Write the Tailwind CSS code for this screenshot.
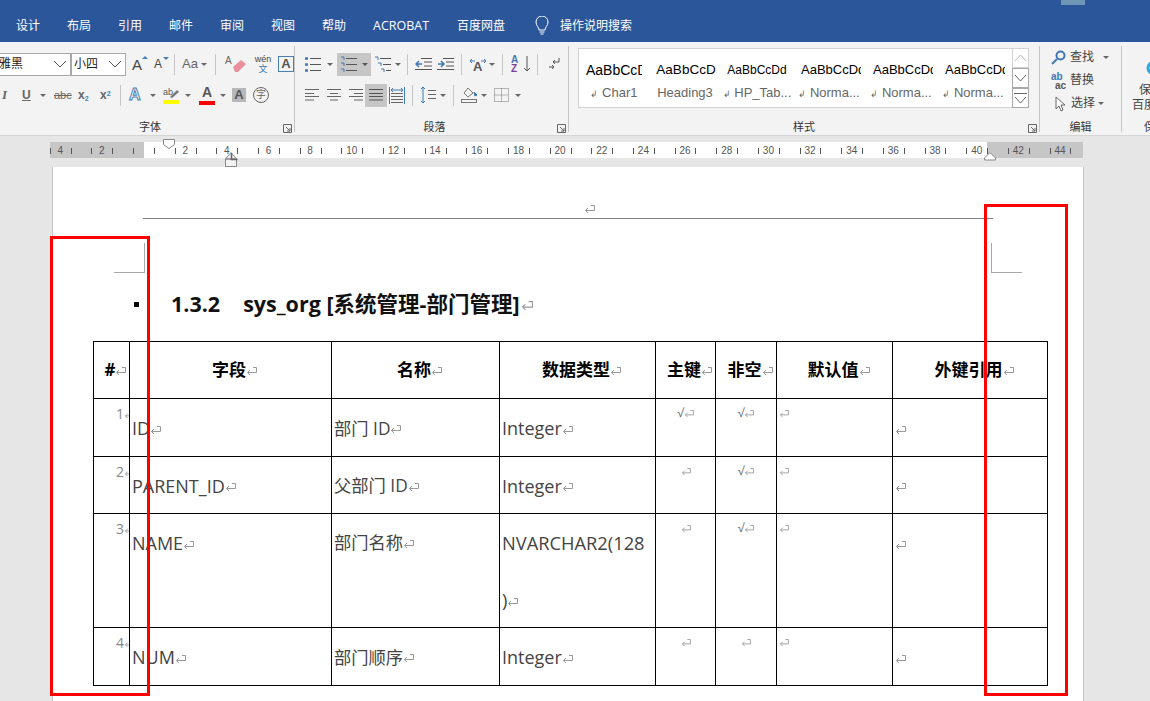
<!DOCTYPE html>
<html lang="zh">
<head>
<meta charset="UTF-8">
<title>Word</title>
<script src="https://cdn.jsdelivr.net/npm/@tailwindcss/browser@4"></script>
</head>
<body class="relative w-[1150px] h-[701px] overflow-hidden bg-[#e6e6e6] font-['Liberation_Sans','Noto_Sans_CJK_SC',sans-serif]">

<svg class="hidden"><symbol id="ret" viewBox="0 0 11 9"><path d="M7 .500h3.500v5H1.500M4 3L1.500 5.500 4 8" fill="none" stroke="#999"/></symbol></svg>

<!-- tab bar -->
<div class="relative h-[42px] bg-[#2b579a] text-white text-[12px] flex items-center pl-[16px] pt-[10px]">
  <span class="w-[51px]">设计</span>
  <span class="w-[51px]">布局</span>
  <span class="w-[51px]">引用</span>
  <span class="w-[51px]">邮件</span>
  <span class="w-[51px]">审阅</span>
  <span class="w-[51px]">视图</span>
  <span class="w-[51px]">帮助</span>
  <span class="w-[84px] text-[12.500px] font-['Open_Sans',sans-serif]">ACROBAT</span>
  <span class="w-[77px]">百度网盘</span>
  <svg class="w-[16px] h-[20px] mr-[10px]" viewBox="0 0 16 20" fill="none" stroke="#fff"><path d="M5 14c0-3-3-4-3-8a6 6 0 0 1 12 0c0 4-3 5-3 8zM5.500 16h5M6.500 18h3"/></svg>
  <span>操作说明搜索</span>
  <div class="absolute left-[1061px] top-0 w-[24px] h-[5px] bg-[#8fb0c0]/70"></div>
</div>

<!-- ribbon -->
<div class="h-[94px] bg-[#f3f3f3] border-b border-[#d6d6d6] flex pt-[4px] text-[#444]">

  <!-- font -->
  <div class="relative w-[295px] h-[86px] border-r border-[#c6c6c6] shrink-0">
    <div class="flex items-center h-[24px] mt-[6px]">
      <div class="w-[71px] h-[23px] bg-white border border-[#a8a8a8] border-l-0 flex items-center justify-between pr-[3px] text-[12px] text-[#222]">
        <span class="-ml-[1px]">雅黑</span>
        <svg class="w-[14px] h-[8px]" viewBox="0 0 14 8" fill="none" stroke="#555"><path d="M1 1l6 6 6-6"/></svg>
      </div>
      <div class="w-[55px] h-[23px] bg-white border border-[#a8a8a8] flex items-center justify-between pl-[2px] pr-[3px] text-[12px] text-[#222]">
        <span>小四</span>
        <svg class="w-[14px] h-[8px]" viewBox="0 0 14 8" fill="none" stroke="#555"><path d="M1 1l6 6 6-6"/></svg>
      </div>
      <span class="ml-[6px] w-[22px] text-[15px] leading-none relative">A<i class="absolute left-[10px] -top-[1px] border-x-[3px] border-b-[3px] border-x-transparent border-b-[#4a7fb5]"></i></span>
      <span class="w-[18px] text-[12px] leading-none relative">A<i class="absolute left-[9px] -top-[1px] border-x-[3px] border-t-[3px] border-x-transparent border-t-[#4a7fb5]"></i></span>
      <span class="w-px h-[21px] bg-[#c6c6c6] ml-[2px]"></span>
      <span class="ml-[7px] text-[13px] text-[#666]">Aa</span>
      <i class="ml-[3px] border-x-[3px] border-t-[3px] border-x-transparent border-t-[#666]"></i>
      <span class="w-px h-[21px] bg-[#c6c6c6] ml-[8px]"></span>
      <svg class="ml-[8px] w-[24px] h-[20px]" viewBox="0 0 24 20"><path d="M9 13l8-7 5 4-8 8h-3z" fill="#e8909c"/><text x="1" y="10" font-size="10" fill="#666">A</text></svg>
      <div class="ml-[4px] w-[22px] text-center leading-[10px]"><div class="text-[9px] text-[#444]">wén</div><div class="text-[9px] text-[#2f7ab5]">文</div></div>
      <div class="ml-[4px] w-[16px] h-[16px] border border-[#4a7fb5] flex items-center justify-center text-[13px] text-[#555] font-bold">A</div>
    </div>
    <div class="flex items-center h-[24px] mt-[7px] text-[#666]">
      <span class="ml-[2px] w-[20px] italic font-['Liberation_Serif',serif] font-bold text-[13px]">I</span>
      <span class="w-[15px] underline font-bold text-[12px]">U</span>
      <i class="ml-[3px] border-x-[3px] border-t-[3px] border-x-transparent border-t-[#666]"></i>
      <span class="ml-[8px] w-[24px] line-through text-[11px]">abc</span>
      <span class="w-[22px] font-bold text-[12px]">x<sub class="text-[7px] text-[#4a7fb5]">2</sub></span>
      <span class="w-[20px] font-bold text-[12px]">x<sup class="text-[7px] text-[#4a7fb5]">2</sup></span>
      <span class="w-px h-[21px] bg-[#c6c6c6]"></span>
      <span class="ml-[8px] w-[19px] text-[16px] font-bold text-white [-webkit-text-stroke:1px_#4a7fb5] leading-none">A</span>
      <i class="ml-[2px] border-x-[3px] border-t-[3px] border-x-transparent border-t-[#666]"></i>
      <svg class="ml-[7px] w-[17px] h-[20px]" viewBox="0 0 17 20"><text x="0" y="10" font-size="9" fill="#555">ab</text><path d="M7 12l7-7 2 2-7 6z" fill="#777"/><rect y="15" width="16" height="4" fill="#ffff00"/></svg>
      <i class="ml-[5px] border-x-[3px] border-t-[3px] border-x-transparent border-t-[#666]"></i>
      <div class="ml-[8px] w-[16px] h-[20px] text-center text-[14px] font-bold leading-[15px] text-[#555] border-b-[4px] border-[#ff0000]">A</div>
      <i class="ml-[5px] border-x-[3px] border-t-[3px] border-x-transparent border-t-[#666]"></i>
      <div class="ml-[6px] w-[14px] h-[14px] bg-[#b8b8b8] text-center text-[13px] font-bold leading-[14px] text-[#555]">A</div>
      <div class="ml-[7px] w-[16px] h-[16px] rounded-full border border-[#666] text-center text-[10px] leading-[14px]">字</div>
    </div>
    <div class="absolute left-0 right-0 top-[74px] text-center text-[11px] leading-[14px] pl-[6px] pr-0 text-[#333]">字体</div>
    <svg class="absolute left-[283px] top-[78px] w-[9px] h-[9px]" viewBox="0 0 9 9" fill="none" stroke="#666"><path d="M.500 .500h8v8h-8zM3 3l4 4M7 4v3H4"/></svg>
  </div>

  <!-- paragraph -->
  <div class="relative w-[274px] h-[86px] border-r border-[#c6c6c6] shrink-0">
    <div class="flex items-center h-[24px] mt-[6px] pl-[9px]">
      <svg class="w-[18px] h-[18px]" viewBox="0 0 18 18" fill="none" stroke="#555"><path d="M6 3.500h11M6 9.500h11M6 15.500h11"/><path d="M1 3.500h3M1 9.500h3M1 15.500h3" stroke="#3f78b3" stroke-width="2.500"/></svg>
      <i class="ml-[5px] border-x-[3px] border-t-[3px] border-x-transparent border-t-[#666]"></i>
      <div class="ml-[4px] w-[34px] h-[23px] bg-[#c6c6c6] flex items-center pl-[3px]">
        <svg class="w-[18px] h-[18px]" viewBox="0 0 18 18" fill="none" stroke="#555"><path d="M6 3.500h11M6 9.500h11M6 15.500h11"/><path d="M1 2h3v3M1 8h3v3M1 14h3v3" stroke="#3f78b3"/></svg>
        <i class="ml-[4px] border-x-[3px] border-t-[3px] border-x-transparent border-t-[#555]"></i>
      </div>
      <svg class="ml-[3px] w-[18px] h-[18px]" viewBox="0 0 18 18" fill="none" stroke="#555"><path d="M6 3.500h11M9 9.500h8M12 15.500h5"/><path d="M1 2h3v3M4 8h3v3M7 14h3v3" stroke="#3f78b3"/></svg>
      <i class="ml-[3px] border-x-[3px] border-t-[3px] border-x-transparent border-t-[#666]"></i>
      <span class="w-px h-[21px] bg-[#c6c6c6] ml-[6px]"></span>
      <svg class="ml-[7px] w-[17px] h-[14px]" viewBox="0 0 17 14" fill="none" stroke="#555"><path d="M6 1.500h11M9 5h8M9 9h8M0 12.500h17"/><path d="M7 7H1M4 4L1 7l3 3" stroke="#3f78b3" stroke-width="1.500"/></svg>
      <svg class="ml-[5px] w-[17px] h-[14px]" viewBox="0 0 17 14" fill="none" stroke="#555"><path d="M6 1.500h11M9 5h8M9 9h8M0 12.500h17"/><path d="M1 7h6M4 4l3 3-3 3" stroke="#3f78b3" stroke-width="1.500"/></svg>
      <span class="w-px h-[21px] bg-[#c6c6c6] ml-[7px]"></span>
      <svg class="ml-[7px] w-[18px] h-[16px]" viewBox="0 0 18 16" fill="none"><text x="4" y="15" font-size="13" font-weight="700" fill="#555" stroke="none">A</text><path d="M1 5h5M3 3L1 5l2 2M17 5h-5M15 3l2 2-2 2" stroke="#3f78b3"/></svg>
      <i class="ml-[2px] border-x-[3px] border-t-[3px] border-x-transparent border-t-[#666]"></i>
      <span class="w-px h-[21px] bg-[#c6c6c6] ml-[7px]"></span>
      <div class="ml-[8px] w-[12px] text-[10px] font-bold leading-[9px]"><div class="text-[#3f78b3]">A</div><div class="text-[#7d3f9e]">Z</div></div>
      <svg class="w-[8px] h-[18px]" viewBox="0 0 8 18" fill="none" stroke="#555"><path d="M4 1v15M1 13l3 3 3-3"/></svg>
      <span class="w-px h-[21px] bg-[#c6c6c6] ml-[6px]"></span>
      <svg class="ml-[10px] w-[12px] h-[15px]" viewBox="0 0 12 15" fill="none" stroke="#555"><path d="M11 1v4H5M7 3L5 5l2 2M1 10h5M4 8l2 2-2 2"/></svg>
    </div>
    <div class="flex items-center h-[24px] mt-[7px] pl-[9px]">
      <svg class="w-[16px] h-[12px]" viewBox="0 0 16 12" stroke="#666"><path d="M1 .500h14M1 4.500h9M1 7.500h14M1 11h9"/></svg>
      <svg class="ml-[6px] w-[16px] h-[12px]" viewBox="0 0 16 12" stroke="#666"><path d="M1 .500h14M4 4.500h8M1 7.500h14M4 11h8"/></svg>
      <svg class="ml-[6px] w-[16px] h-[12px]" viewBox="0 0 16 12" stroke="#666"><path d="M1 .500h14M6 4.500h9M1 7.500h14M6 11h9"/></svg>
      <div class="ml-[1px] w-[22px] h-[23px] bg-[#c6c6c6] flex items-center justify-center"><svg class="w-[16px] h-[12px]" viewBox="0 0 16 12" stroke="#555"><path d="M1 .500h14M1 4.500h14M1 7.500h14M1 11h14"/></svg></div>
      <svg class="ml-[2px] w-[16px] h-[17px]" viewBox="0 0 16 17" fill="none" stroke="#666"><path d="M2 6.500h12M2 9.500h12M2 12.500h12M2 15.500h12"/><path d="M.500 0v17M15.500 0v17M2 3h12M4 1L2 3l2 2M12 1l2 2-2 2" stroke="#3f78b3"/></svg>
      <span class="w-px h-[21px] bg-[#c6c6c6] ml-[7px]"></span>
      <svg class="ml-[7px] w-[16px] h-[18px]" viewBox="0 0 16 18" fill="none" stroke="#666"><path d="M8 4.500h8M8 8.500h8M8 12.500h8"/><path d="M3 1v16M1 3l2-2 2 2M1 15l2 2 2-2" stroke="#3f78b3"/></svg>
      <i class="ml-[4px] border-x-[3px] border-t-[3px] border-x-transparent border-t-[#666]"></i>
      <span class="w-px h-[21px] bg-[#c6c6c6] ml-[7px]"></span>
      <svg class="ml-[7px] w-[17px] h-[16px]" viewBox="0 0 17 16" fill="none" stroke="#777"><path d="M7 1l5 5-5 4-4-4z"/><path d="M13 5l3 3-2 1z" fill="#3f78b3" stroke="#3f78b3"/><rect x=".500" y="12.500" width="15" height="3"/></svg>
      <i class="ml-[3px] border-x-[3px] border-t-[3px] border-x-transparent border-t-[#666]"></i>
      <svg class="ml-[7px] w-[15px] h-[14px]" viewBox="0 0 15 14" fill="none" stroke="#777" stroke-dasharray="1 1"><path d="M.500 .500h14v13h-14zM.500 7h14M7.500 .500v13"/></svg>
      <i class="ml-[6px] border-x-[3px] border-t-[3px] border-x-transparent border-t-[#666]"></i>
    </div>
    <div class="absolute left-0 right-0 top-[74px] text-center text-[11px] leading-[14px] text-[#333] pl-[6px]">段落</div>
    <svg class="absolute left-[262px] top-[78px] w-[9px] h-[9px]" viewBox="0 0 9 9" fill="none" stroke="#666"><path d="M.500 .500h8v8h-8zM3 3l4 4M7 4v3H4"/></svg>
  </div>

  <!-- styles -->
  <div class="relative w-[471px] h-[86px] border-r border-[#c6c6c6] shrink-0 pl-[9px]">
    <div class="flex h-[60px] mt-[2px] w-[451px] border border-[#d2d2d2] bg-white">
      <div class="w-[70px] text-center overflow-hidden"><div class="text-[14px] leading-[20px] mt-[11px] text-black whitespace-nowrap overflow-hidden mx-[7px]">AaBbCcD</div><div class="text-[13px] leading-[16px] mt-[5px] text-[#666]"><span class="text-[9px]">↲</span> Char1</div></div>
      <div class="w-[72px] text-center overflow-hidden"><div class="text-[13.500px] leading-[20px] mt-[11px] text-black whitespace-nowrap overflow-hidden ml-[6px] mr-[4px]">AaBbCcD</div><div class="text-[13px] leading-[16px] mt-[5px] text-[#666]">Heading3</div></div>
      <div class="w-[72px] text-center overflow-hidden"><div class="text-[12px] leading-[20px] mt-[11px] text-black whitespace-nowrap overflow-hidden mx-[4px]">AaBbCcDd</div><div class="text-[13px] leading-[16px] mt-[5px] text-[#666]"><span class="text-[9px]">↲</span> HP_Tab...</div></div>
      <div class="w-[72px] text-center overflow-hidden"><div class="text-[13px] leading-[20px] mt-[11px] text-black whitespace-nowrap overflow-hidden ml-[8px] mr-[4px]">AaBbCcDd</div><div class="text-[13px] leading-[16px] mt-[5px] text-[#666]"><span class="text-[9px]">↲</span> Norma...</div></div>
      <div class="w-[72px] text-center overflow-hidden"><div class="text-[13px] leading-[20px] mt-[11px] text-black whitespace-nowrap overflow-hidden ml-[8px] mr-[4px]">AaBbCcDd</div><div class="text-[13px] leading-[16px] mt-[5px] text-[#666]"><span class="text-[9px]">↲</span> Norma...</div></div>
      <div class="w-[72px] text-center overflow-hidden"><div class="text-[13px] leading-[20px] mt-[11px] text-black whitespace-nowrap overflow-hidden ml-[8px] mr-[4px]">AaBbCcDd</div><div class="text-[13px] leading-[16px] mt-[5px] text-[#666]"><span class="text-[9px]">↲</span> Norma...</div></div>
      <div class="ml-auto w-[17px] -my-px -mr-px flex flex-col">
        <div class="h-[20px] border border-[#d2d2d2] flex items-center justify-center"><svg class="w-[13px] h-[8px]" viewBox="0 0 13 8" fill="none" stroke="#bbb"><path d="M1 7l5.500-6L12 7"/></svg></div>
        <div class="h-[20px] border border-[#a8a8a8] flex items-center justify-center"><svg class="w-[13px] h-[8px]" viewBox="0 0 13 8" fill="none" stroke="#666"><path d="M1 1l5.500 6L12 1"/></svg></div>
        <div class="h-[20px] border border-[#a8a8a8] flex flex-col items-center justify-center gap-[2px]"><div class="w-[13px] h-px bg-[#666]"></div><svg class="w-[13px] h-[8px]" viewBox="0 0 13 8" fill="none" stroke="#666"><path d="M1 1l5.500 6L12 1"/></svg></div>
      </div>
    </div>
    <div class="absolute left-0 right-0 top-[74px] text-center text-[11px] leading-[14px] text-[#333]">样式</div>
    <svg class="absolute left-[459px] top-[78px] w-[9px] h-[9px]" viewBox="0 0 9 9" fill="none" stroke="#666"><path d="M.500 .500h8v8h-8zM3 3l4 4M7 4v3H4"/></svg>
  </div>

  <!-- editing -->
  <div class="relative w-[82px] h-[86px] border-r border-[#c6c6c6] shrink-0 pl-[11px] text-[12px] text-[#444] leading-[23px]">
    <div class="flex items-center h-[23px]">
      <svg class="w-[15px] h-[15px]" viewBox="0 0 15 15" fill="none" stroke="#3f78b3" stroke-width="2"><circle cx="9.500" cy="5.500" r="4"/><path d="M6 9l-5 5"/></svg>
      <span class="ml-[4px]">查找</span><i class="ml-[9px] border-x-[3px] border-t-[3px] border-x-transparent border-t-[#666]"></i>
    </div>
    <div class="flex items-center h-[23px]">
      <div class="w-[16px] text-[10px] leading-[9px] font-bold"><div class="text-[#3f78b3]">ab</div><div class="text-[#555] pl-[4px]">ac</div></div>
      <span class="ml-[3px]">替换</span>
    </div>
    <div class="flex items-center h-[23px]">
      <svg class="ml-[4px] w-[11px] h-[16px]" viewBox="0 0 11 16" fill="#fff" stroke="#666"><path d="M1 1v12l3-3 2 5 2-1-2-5h4z"/></svg>
      <span class="ml-[5px]">选择</span><i class="ml-[3px] border-x-[3px] border-t-[3px] border-x-transparent border-t-[#666]"></i>
    </div>
    <div class="absolute left-0 right-0 top-[74px] text-center text-[11px] leading-[14px] text-[#333]">编辑</div>
  </div>

  <!-- save -->
  <div class="relative flex-1 h-[86px] overflow-hidden text-[12px] text-[#444] pl-[10px] leading-[15px]">
    <svg class="ml-[10px] mt-[8px] w-[15px] h-[20px]" viewBox="0 0 15 20" fill="none" stroke="#2ba8e0" stroke-width="3"><circle cx="12" cy="14" r="6"/></svg>
    <div class="mt-[9px] pl-[7px]">保</div>
    <div class="whitespace-nowrap">百度</div>
    <div class="absolute top-[74px] left-[22px] text-[11px] leading-[14px] text-[#333]">保</div>
  </div>
</div>

<!-- ruler -->
<svg class="block ml-[50px] mt-[4px] w-[1033px] h-[20px] overflow-visible" viewBox="0 0 1033 20" id="ruler" font-family="Liberation Sans" font-size="10" fill="#555">
  <rect x="0" y="2" width="1033" height="16" fill="#c6c6c6"/>
  <rect x="94" y="2" width="843" height="16" fill="#fff"/>
  <g id="ticks" stroke="#555"></g>
  <g id="nums" text-anchor="middle"></g>
  <path d="M113.500 -.500h11v5l-5.500 4-5.500-4z" fill="#fff" stroke="#888"/>
  <path d="M175.500 19l5.500-6.500 5.500 6.500z M175.500 19h11v7.500h-11z" fill="#f3f3f3" stroke="#888"/>
  <path d="M181.500 13v6.500h6" fill="none" stroke="#666" stroke-width="1.500"/>
  <path d="M934.500 18l5.500-5.500 5.500 5.500v2h-11z" fill="#fff" stroke="#888"/>
</svg>

<!-- page -->
<div class="absolute left-[52px] top-[167px] w-[1032px] h-[540px] bg-white border-x border-[#c6c6c6]">
  <div class="ml-[90px] w-[850px] h-[52px] border-b border-[#808080] flex items-end justify-center pb-[4px] pl-[42px]"><svg class="w-[11px] h-[9px]"><use href="#ret"/></svg></div>

  <!-- crop marks -->
  <div class="flex justify-between mt-[24px] ml-[61px] w-[908px]">
    <div class="w-[31px] h-[30px] border-r border-b border-[#a8a8a8]"></div>
    <div class="w-[31px] h-[30px] border-l border-b border-[#a8a8a8]"></div>
  </div>

  <h2 class="mt-[17px] ml-[81px] flex items-center text-[21.500px] leading-[28px] font-bold text-[#111] font-['Open_Sans','Noto_Sans_CJK_SC',sans-serif]">
    <span class="w-[5px] h-[5px] bg-black mr-[32px]"></span>
    <span class="mr-[23px]">1.3.2</span>
    <span class="whitespace-nowrap">sys_org [系统管理-部门管理]<svg class="inline w-[12px] h-[10px] ml-[1px]"><use href="#ret"/></svg></span>
  </h2>

  <table class="mt-[23px] ml-[40px] table-fixed border-collapse w-[955px] text-[18px] text-[#444] font-['Open_Sans','Noto_Sans_CJK_SC',sans-serif]">
    <colgroup><col class="w-[36px]"><col class="w-[202px]"><col class="w-[168px]"><col class="w-[156px]"><col class="w-[60px]"><col class="w-[61px]"><col class="w-[116px]"><col class="w-[155px]"></colgroup>
    <thead class="text-[17px] text-black font-bold">
      <tr class="h-[57px] text-center *:border *:border-black *:pl-[8px]">
        <th class="whitespace-nowrap">#<svg class="inline w-[11px] h-[9px]"><use href="#ret"/></svg></th>
        <th>字段<svg class="inline w-[11px] h-[9px]"><use href="#ret"/></svg></th>
        <th>名称<svg class="inline w-[11px] h-[9px]"><use href="#ret"/></svg></th>
        <th>数据类型<svg class="inline w-[11px] h-[9px]"><use href="#ret"/></svg></th>
        <th class="whitespace-nowrap">主键<svg class="inline w-[11px] h-[9px]"><use href="#ret"/></svg></th>
        <th class="whitespace-nowrap">非空<svg class="inline w-[11px] h-[9px]"><use href="#ret"/></svg></th>
        <th>默认值<svg class="inline w-[11px] h-[9px]"><use href="#ret"/></svg></th>
        <th>外键引用<svg class="inline w-[11px] h-[9px]"><use href="#ret"/></svg></th>
      </tr>
    </thead>
    <tbody>
      <tr class="h-[58px] *:border *:border-black">
        <td class="align-top text-right overflow-hidden whitespace-nowrap text-[14px] leading-[16px] text-[#888] pt-[7px]">1<svg class="inline w-[10px] h-[8px] -mr-[5px]"><use href="#ret"/></svg></td>
        <td class="pl-[2px] pt-[2px]">ID<svg class="inline w-[11px] h-[9px]"><use href="#ret"/></svg></td>
        <td class="pl-[2px] pt-[2px] text-[17.300px]">部门 ID<svg class="inline w-[11px] h-[9px]"><use href="#ret"/></svg></td>
        <td class="pl-[2px] pt-[2px]">Integer<svg class="inline w-[11px] h-[9px]"><use href="#ret"/></svg></td>
        <td class="align-top text-center text-[12px] leading-[14px] text-[#666] pt-[7px]">√<svg class="inline w-[10px] h-[8px]"><use href="#ret"/></svg></td>
        <td class="align-top text-center text-[12px] leading-[14px] text-[#666] pt-[7px]">√<svg class="inline w-[10px] h-[8px]"><use href="#ret"/></svg></td>
        <td class="align-top text-[12px] leading-[14px] pt-[7px] pl-[2px]"><svg class="inline w-[10px] h-[8px]"><use href="#ret"/></svg></td>
        <td class="pl-[2px] pt-[2px]"><svg class="inline w-[11px] h-[9px]"><use href="#ret"/></svg></td>
      </tr>
      <tr class="h-[57px] *:border *:border-black">
        <td class="align-top text-right overflow-hidden whitespace-nowrap text-[14px] leading-[16px] text-[#888] pt-[7px]">2<svg class="inline w-[10px] h-[8px] -mr-[5px]"><use href="#ret"/></svg></td>
        <td class="pl-[2px] pt-[2px]">PARENT_ID<svg class="inline w-[11px] h-[9px]"><use href="#ret"/></svg></td>
        <td class="pl-[2px] pt-[2px] text-[17.300px]">父部门 ID<svg class="inline w-[11px] h-[9px]"><use href="#ret"/></svg></td>
        <td class="pl-[2px] pt-[2px]">Integer<svg class="inline w-[11px] h-[9px]"><use href="#ret"/></svg></td>
        <td class="align-top text-center text-[12px] leading-[14px] pt-[7px]"><svg class="inline w-[10px] h-[8px]"><use href="#ret"/></svg></td>
        <td class="align-top text-center text-[12px] leading-[14px] text-[#666] pt-[7px]">√<svg class="inline w-[10px] h-[8px]"><use href="#ret"/></svg></td>
        <td class="align-top text-[12px] leading-[14px] pt-[7px] pl-[2px]"><svg class="inline w-[10px] h-[8px]"><use href="#ret"/></svg></td>
        <td class="pl-[2px] pt-[2px]"><svg class="inline w-[11px] h-[9px]"><use href="#ret"/></svg></td>
      </tr>
      <tr class="h-[114px] *:border *:border-black">
        <td class="align-top text-right overflow-hidden whitespace-nowrap text-[14px] leading-[16px] text-[#888] pt-[7px]">3<svg class="inline w-[10px] h-[8px] -mr-[5px]"><use href="#ret"/></svg></td>
        <td class="align-top pl-[2px] pt-[16px] leading-[26px]">NAME<svg class="inline w-[11px] h-[9px]"><use href="#ret"/></svg></td>
        <td class="align-top pl-[2px] pt-[16px] leading-[26px] text-[17.300px]">部门名称<svg class="inline w-[11px] h-[9px]"><use href="#ret"/></svg></td>
        <td class="align-top pl-[2px] pt-[16px] leading-[26px] text-[18.300px]">NVARCHAR2(128<div class="mt-[31px]">)<svg class="inline w-[11px] h-[9px]"><use href="#ret"/></svg></div></td>
        <td class="align-top text-center text-[12px] leading-[14px] pt-[7px]"><svg class="inline w-[10px] h-[8px]"><use href="#ret"/></svg></td>
        <td class="align-top text-center text-[12px] leading-[14px] text-[#666] pt-[7px]">√<svg class="inline w-[10px] h-[8px]"><use href="#ret"/></svg></td>
        <td class="align-top text-[12px] leading-[14px] pt-[7px] pl-[2px]"><svg class="inline w-[10px] h-[8px]"><use href="#ret"/></svg></td>
        <td class="align-top pl-[2px] pt-[16px] leading-[26px]"><svg class="inline w-[11px] h-[9px]"><use href="#ret"/></svg></td>
      </tr>
      <tr class="h-[58px] *:border *:border-black">
        <td class="align-top text-right overflow-hidden whitespace-nowrap text-[14px] leading-[16px] text-[#888] pt-[7px]">4<svg class="inline w-[10px] h-[8px] -mr-[5px]"><use href="#ret"/></svg></td>
        <td class="pl-[2px] pt-[2px]">NUM<svg class="inline w-[11px] h-[9px]"><use href="#ret"/></svg></td>
        <td class="pl-[2px] pt-[2px] text-[17.300px]">部门顺序<svg class="inline w-[11px] h-[9px]"><use href="#ret"/></svg></td>
        <td class="pl-[2px] pt-[2px]">Integer<svg class="inline w-[11px] h-[9px]"><use href="#ret"/></svg></td>
        <td class="align-top text-center text-[12px] leading-[14px] pt-[7px]"><svg class="inline w-[10px] h-[8px]"><use href="#ret"/></svg></td>
        <td class="align-top text-center text-[12px] leading-[14px] pt-[7px]"><svg class="inline w-[10px] h-[8px]"><use href="#ret"/></svg></td>
        <td class="align-top text-[12px] leading-[14px] pt-[7px] pl-[2px]"><svg class="inline w-[10px] h-[8px]"><use href="#ret"/></svg></td>
        <td class="pl-[2px] pt-[2px]"><svg class="inline w-[11px] h-[9px]"><use href="#ret"/></svg></td>
      </tr>
    </tbody>
  </table>
</div>

<!-- red annotation boxes -->
<div class="absolute left-[50px] top-[236px] w-[100px] h-[460px] border-[3px] border-[#ff0000]"></div>
<div class="absolute left-[984px] top-[204px] w-[84px] h-[492px] border-[3px] border-[#ff0000]"></div>

<script>
  // ruler: ticks sit half a unit off, numbers on even units
  const ticks = document.getElementById('ticks');
  const nums = document.getElementById('nums');
  const NS = 'http://www.w3.org/2000/svg';
  const zero = 93.5;
  const unit = 20.83;
  for (let k = -5; k <= 44; k++) {
    const tx = zero + (k + .5) * unit;
    const l = document.createElementNS(NS, 'line');
    l.setAttribute('x1', Math.round(tx) + .5);
    l.setAttribute('x2', Math.round(tx) + .5);
    l.setAttribute('y1', 8);
    l.setAttribute('y2', 14);
    ticks.appendChild(l);
    if (k % 2 === 0 && k !== 0) {
      const t = document.createElementNS(NS, 'text');
      t.setAttribute('x', zero + k * unit);
      t.setAttribute('y', 14);
      t.textContent = Math.abs(k);
      nums.appendChild(t);
    }
  }
</script>
</body>
</html>
